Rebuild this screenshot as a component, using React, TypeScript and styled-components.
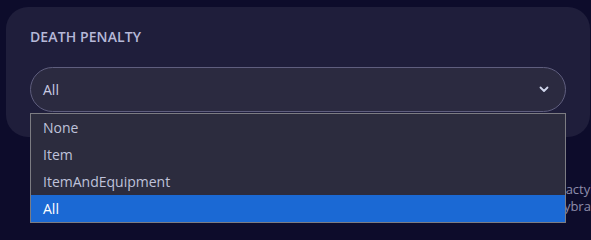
import React from "react";
import styled, { createGlobalStyle } from "styled-components";

const Global = createGlobalStyle`
  html, body { margin: 0; padding: 0; background: #0d0c2b; }
  body { font-family: "Open Sans", "Noto Sans", sans-serif; overflow: hidden; }
`;

const Page = styled.div`
  position: relative;
  width: 591px;
  height: 223px;
  padding: 7px 1px 0 6px;
  box-sizing: border-box;
  overflow: hidden;
`;

const Card = styled.section`
  background: #1f1e3b;
  border-radius: 22px;
  padding: 20px 24px 25px 24px;
  display: flex;
  flex-direction: column;
  gap: 21px;
`;

const Label = styled.div`
  font-size: 14px;
  font-weight: 600;
  color: #b6b8d8;
  letter-spacing: 0.1px;
  line-height: 19px;
`;

const Field = styled.div`
  position: relative;
`;

const SelectBox = styled.div`
  height: 45px;
  box-sizing: border-box;
  border: 1px solid #5f5e7e;
  border-radius: 23px;
  background: #2b2a40;
  display: flex;
  align-items: center;
  justify-content: space-between;
  padding: 0 16px 0 12px;
  color: #c9cbe0;
  font-size: 14px;
`;

const Menu = styled.ul`
  position: absolute;
  top: 46px;
  left: 0;
  right: 0;
  margin: 0;
  padding: 0;
  list-style: none;
  background: #2c2c3e;
  border: 1px solid #7c7c82;
  z-index: 2;
`;

const Option = styled.li<{ $selected?: boolean }>`
  height: 27px;
  display: flex;
  align-items: center;
  padding: 0 12px;
  font-size: 14px;
  color: ${(p) => (p.$selected ? "#ffffff" : "#bfc2da")};
  background: ${(p) => (p.$selected ? "#1b69d4" : "transparent")};
`;

const Footer = styled.div`
  padding: 44px 0 0 444px;
  font-size: 13px;
  line-height: 17px;
  color: #8d8dab;
  white-space: nowrap;
`;

const Chevron = () => (
  <svg width="10" height="7" viewBox="0 0 10 7" fill="none">
    <path d="M1.5 1.5 L5 5 L8.5 1.5" stroke="#d0d6ec" strokeWidth="1.8" strokeLinecap="round" strokeLinejoin="round" />
  </svg>
);

const options = ["None", "Item", "ItemAndEquipment", "All"];

export default function App() {
  return (
    <>
      <Global />
      <Page>
        <Card>
          <Label>DEATH PENALTY</Label>
          <Field>
            <SelectBox>
              <span>All</span>
              <Chevron />
            </SelectBox>
            <Menu>
              {options.map((o) => (
                <Option key={o} $selected={o === "All"}>
                  {o}
                </Option>
              ))}
            </Menu>
          </Field>
        </Card>
        <Footer>
          <div>Powered by Pterodactyl</div>
          <div>Dark theme by @Hybrand</div>
        </Footer>
      </Page>
    </>
  );
}
